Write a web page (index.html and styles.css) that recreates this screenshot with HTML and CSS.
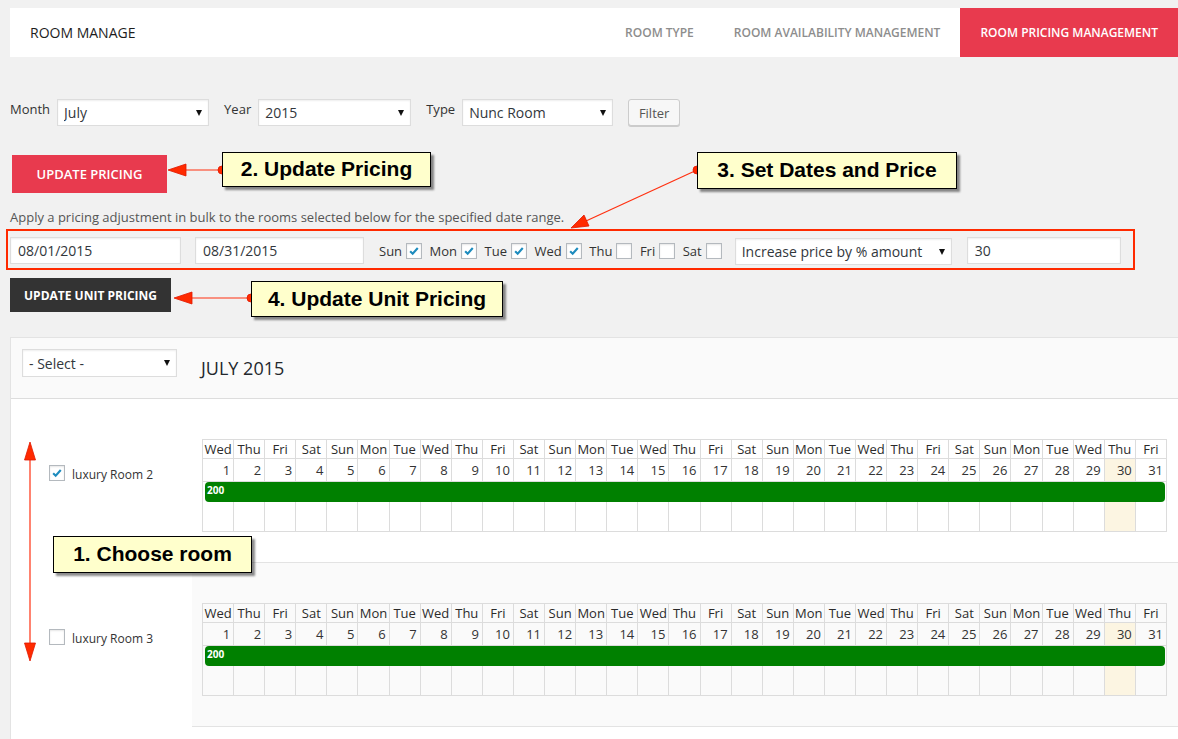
FILE: index.html
```html
<!DOCTYPE html>
<html lang="en">
<head>
<meta charset="utf-8">
<title>Room Manage</title>
<link rel="stylesheet" href="styles.css">
</head>
<body>
<div class="page">
  <header class="topbar">
    <div class="brand">ROOM MANAGE</div>
    <nav class="tabs">
      <a class="tab" href="#">ROOM TYPE</a>
      <a class="tab" href="#">ROOM AVAILABILITY MANAGEMENT</a>
      <a class="tab active" href="#">ROOM PRICING MANAGEMENT</a>
    </nav>
  </header>

  <form class="filters">
    <label class="flabel">Month</label>
    <span class="select sel-month"><select><option>July</option></select></span>
    <label class="flabel">Year</label>
    <span class="select sel-year"><select><option>2015</option></select></span>
    <label class="flabel">Type</label>
    <span class="select sel-type"><select><option>Nunc Room</option></select></span>
    <button type="button" class="btn-filter">Filter</button>
  </form>

  <button type="button" class="btn-red">UPDATE PRICING</button>

  <p class="hint">Apply a pricing adjustment in bulk to the rooms selected below for the specified date range.</p>

  <div class="bulk">
    <input class="field date1" type="text" value="08/01/2015">
    <input class="field date2" type="text" value="08/31/2015">
    <span class="day">Sun</span><span class="cb checked"><svg viewBox="0 0 16 16"><path d="M3.6 8.3l2.9 2.9 5.8-6.6"/></svg></span>
    <span class="day">Mon</span><span class="cb checked"><svg viewBox="0 0 16 16"><path d="M3.6 8.3l2.9 2.9 5.8-6.6"/></svg></span>
    <span class="day">Tue</span><span class="cb checked"><svg viewBox="0 0 16 16"><path d="M3.6 8.3l2.9 2.9 5.8-6.6"/></svg></span>
    <span class="day">Wed</span><span class="cb checked"><svg viewBox="0 0 16 16"><path d="M3.6 8.3l2.9 2.9 5.8-6.6"/></svg></span>
    <span class="day">Thu</span><span class="cb"></span>
    <span class="day">Fri</span><span class="cb"></span>
    <span class="day">Sat</span><span class="cb last"></span>
    <span class="select sel-adjust"><select><option>Increase price by % amount</option></select></span>
    <input class="field amount" type="text" value="30">
  </div>

  <button type="button" class="btn-dark">UPDATE UNIT PRICING</button>

  <section class="panel">
    <div class="panel-head">
      <span class="select sel-room"><select><option>- Select -</option></select></span>
      <h2 class="month-title">JULY 2015</h2>
    </div>
    <table class="rooms">
      <tr>
        <th class="room"><span class="cb checked"><svg viewBox="0 0 16 16"><path d="M3.6 8.3l2.9 2.9 5.8-6.6"/></svg></span><span class="room-name">luxury Room 2</span></th>
        <td class="cal">
          <div class="month-wrap">
            <table class="month">
              <tr class="dow"><th>Wed</th><th>Thu</th><th>Fri</th><th>Sat</th><th>Sun</th><th>Mon</th><th>Tue</th><th>Wed</th><th>Thu</th><th>Fri</th><th>Sat</th><th>Sun</th><th>Mon</th><th>Tue</th><th>Wed</th><th>Thu</th><th>Fri</th><th>Sat</th><th>Sun</th><th>Mon</th><th>Tue</th><th>Wed</th><th>Thu</th><th>Fri</th><th>Sat</th><th>Sun</th><th>Mon</th><th>Tue</th><th>Wed</th><th>Thu</th><th>Fri</th></tr>
              <tr class="num"><td>1</td><td>2</td><td>3</td><td>4</td><td>5</td><td>6</td><td>7</td><td>8</td><td>9</td><td>10</td><td>11</td><td>12</td><td>13</td><td>14</td><td>15</td><td>16</td><td>17</td><td>18</td><td>19</td><td>20</td><td>21</td><td>22</td><td>23</td><td>24</td><td>25</td><td>26</td><td>27</td><td>28</td><td>29</td><td class="today">30</td><td>31</td></tr>
              <tr class="slot"><td></td><td></td><td></td><td></td><td></td><td></td><td></td><td></td><td></td><td></td><td></td><td></td><td></td><td></td><td></td><td></td><td></td><td></td><td></td><td></td><td></td><td></td><td></td><td></td><td></td><td></td><td></td><td></td><td></td><td class="today"></td><td></td></tr>
            </table>
            <div class="bar">200</div>
          </div>
        </td>
      </tr>
      <tr class="alt">
        <th class="room"><span class="cb"></span><span class="room-name">luxury Room 3</span></th>
        <td class="cal">
          <div class="month-wrap">
            <table class="month">
              <tr class="dow"><th>Wed</th><th>Thu</th><th>Fri</th><th>Sat</th><th>Sun</th><th>Mon</th><th>Tue</th><th>Wed</th><th>Thu</th><th>Fri</th><th>Sat</th><th>Sun</th><th>Mon</th><th>Tue</th><th>Wed</th><th>Thu</th><th>Fri</th><th>Sat</th><th>Sun</th><th>Mon</th><th>Tue</th><th>Wed</th><th>Thu</th><th>Fri</th><th>Sat</th><th>Sun</th><th>Mon</th><th>Tue</th><th>Wed</th><th>Thu</th><th>Fri</th></tr>
              <tr class="num"><td>1</td><td>2</td><td>3</td><td>4</td><td>5</td><td>6</td><td>7</td><td>8</td><td>9</td><td>10</td><td>11</td><td>12</td><td>13</td><td>14</td><td>15</td><td>16</td><td>17</td><td>18</td><td>19</td><td>20</td><td>21</td><td>22</td><td>23</td><td>24</td><td>25</td><td>26</td><td>27</td><td>28</td><td>29</td><td class="today">30</td><td>31</td></tr>
              <tr class="slot"><td></td><td></td><td></td><td></td><td></td><td></td><td></td><td></td><td></td><td></td><td></td><td></td><td></td><td></td><td></td><td></td><td></td><td></td><td></td><td></td><td></td><td></td><td></td><td></td><td></td><td></td><td></td><td></td><td></td><td class="today"></td><td></td></tr>
            </table>
            <div class="bar">200</div>
          </div>
        </td>
      </tr>
    </table>
  </section>
</div>

<svg class="annotations" width="1178" height="739" viewBox="0 0 1178 739">
  <g stroke="#ff3010" stroke-width="1.2" fill="none">
    <line x1="222" y1="170" x2="184" y2="170"/>
    <line x1="697" y1="170" x2="586" y2="221"/>
    <line x1="251" y1="298" x2="190" y2="298"/>
    <line x1="30" y1="458" x2="30" y2="645"/>
  </g>
  <g fill="#ff2a00" stroke="#e01800" stroke-width="0.8">
    <circle cx="222" cy="170" r="4"/>
    <polygon points="168,170 186,164 186,176"/>
    <circle cx="697" cy="170" r="4"/>
    <polygon points="571,228 589,226 584,215"/>
    <circle cx="251" cy="298" r="4"/>
    <polygon points="174,298 192,292 192,304"/>
    <polygon points="30,442 24.5,460 35.5,460"/>
    <polygon points="30,661 24.5,643 35.5,643"/>
  </g>
</svg>

<div class="callout c1">1. Choose room</div>
<div class="callout c2">2. Update Pricing</div>
<div class="callout c3">3. Set Dates and Price</div>
<div class="callout c4">4. Update Unit Pricing</div>
</body>
</html>
```

FILE: styles.css
```css
html, body {
  margin: 0;
  padding: 0;
}
body {
  position: relative;
  width: 1178px;
  height: 739px;
  overflow: hidden;
  background: #f1f1f1;
  font-family: "Open Sans", "DejaVu Sans", sans-serif;
  font-size: 13px;
  color: #333;
}
.page {
  padding: 8px 0 0 10px;
}

/* top bar */
.topbar {
  display: flex;
  height: 49px;
  background: #fff;
}
.brand {
  padding: 0 20px;
  line-height: 49px;
  font-size: 14px;
  color: #1d1d1d;
}
.tabs {
  margin-left: auto;
  display: flex;
}
.tab {
  padding: 0 20px;
  line-height: 49px;
  font-size: 12px;
  font-weight: 600;
  color: #8d8d8d;
  text-decoration: none;
}
.tab.active {
  background: #e83a4e;
  color: #fff;
}

/* filters */
.filters {
  display: flex;
  align-items: flex-start;
  margin: 42px 0 0;
  height: 27px;
}
.flabel {
  margin: 1px 7px 0 0;
  line-height: 18px;
  color: #333;
}
.select {
  position: relative;
  display: inline-block;
  height: 27px;
  box-sizing: border-box;
}
.select select {
  appearance: none;
  -webkit-appearance: none;
  width: 100%;
  height: 100%;
  box-sizing: border-box;
  margin: 0;
  padding: 0 6px;
  border: 1px solid #ddd;
  border-radius: 0;
  background: #fff;
  box-shadow: inset 0 1px 2px rgba(0, 0, 0, .07);
  font-family: "Open Sans", sans-serif;
  font-size: 14px;
  color: #32373c;
}
.select::after {
  content: "";
  position: absolute;
  right: 7px;
  top: 11px;
  border-left: 3.5px solid transparent;
  border-right: 3.5px solid transparent;
  border-top: 6px solid #111;
}
.sel-month { width: 152px; margin-right: 15px; }
.sel-year { width: 153px; margin-right: 15px; }
.sel-type { width: 151px; margin-right: 15px; }
.btn-filter {
  width: 52px;
  height: 27px;
  padding: 0;
  border: 1px solid #ccc;
  border-radius: 3px;
  background: #f7f7f7;
  box-shadow: 0 1px 0 #ccc;
  font-family: "Open Sans", sans-serif;
  font-size: 13px;
  color: #555;
}

/* buttons */
.btn-red {
  display: block;
  margin: 29px 0 0 2px;
  width: 155px;
  height: 38px;
  padding: 0;
  border: none;
  background: #e83a4e;
  color: #fff;
  font-family: "Open Sans", sans-serif;
  font-size: 13px;
  font-weight: 600;
}
.btn-dark {
  display: block;
  margin: 8px 0 0;
  width: 161px;
  height: 34px;
  padding: 0;
  border: none;
  background: #333;
  color: #fff;
  font-family: "Open Sans", sans-serif;
  font-size: 12px;
  font-weight: 700;
}

.hint {
  margin: 14px 0 0;
  line-height: 20px;
  color: #555;
}

/* bulk row */
.bulk {
  display: flex;
  align-items: center;
  box-sizing: border-box;
  width: 1129px;
  height: 41px;
  margin: 2px 0 0 -4px;
  padding: 4px 0 2px 2px;
  border: 2px solid #ff2a00;
}
.field {
  box-sizing: border-box;
  height: 27px;
  margin: 0;
  padding: 0 7px;
  border: 1px solid #ddd;
  background: #fff;
  box-shadow: inset 0 1px 2px rgba(0, 0, 0, .07);
  font-family: "Open Sans", sans-serif;
  font-size: 14px;
  color: #32373c;
}
.date1 { width: 171px; margin-right: 14px; }
.date2 { width: 169px; margin-right: 15px; }
.amount { width: 154px; }
.day {
  margin-right: 4px;
  line-height: 18px;
  color: #333;
}
.cb {
  display: inline-block;
  box-sizing: border-box;
  width: 16px;
  height: 16px;
  border: 1px solid #b4b9be;
  background: #fff;
  box-shadow: inset 0 1px 2px rgba(0, 0, 0, .1);
  margin-right: 7.5px;
  flex: none;
}
.cb svg {
  display: block;
  width: 14px;
  height: 14px;
}
.cb path {
  fill: none;
  stroke: #1e8cbe;
  stroke-width: 2.4;
}
.cb.last { margin-right: 13px; }
.sel-adjust { width: 217px; margin: 2px 15px 0 0; }

/* panel */
.panel {
  margin-top: 25px;
  background: #fff;
  border-top: 1px solid #e3e3e3;
  border-left: 1px solid #e3e3e3;
  padding-bottom: 40px;
}
.panel-head {
  display: flex;
  align-items: flex-start;
  height: 61px;
  box-sizing: border-box;
  padding: 11px 11px 0;
  background: #fafafa;
  border-bottom: 1px solid #ddd;
}
.sel-room {
  width: 155px;
  height: 28px;
  margin: 0 24px 0 0;
}
.month-title {
  margin: 7px 0 0;
  font-size: 18px;
  line-height: 24px;
  font-weight: 400;
  color: #23282d;
}

.rooms {
  width: 100%;
  border-collapse: collapse;
}
.room {
  width: 181px;
  box-sizing: border-box;
  padding: 66px 0 0 38px;
  vertical-align: top;
  text-align: left;
  font-weight: 400;
  background: #fff;
  white-space: nowrap;
}
.room .cb {
  vertical-align: top;
  margin-right: 7px;
}
.room-name {
  font-size: 12px;
  line-height: 16px;
  color: #333;
}
.cal {
  padding: 40px 11px 30px 10px;
}
.alt .cal {
  background: #fafafa;
  border-top: 1px solid #e3e3e3;
  border-bottom: 1px solid #e3e3e3;
}

.month-wrap {
  position: relative;
  width: 965px;
}
.month {
  width: 965px;
  border-collapse: collapse;
  table-layout: fixed;
}
.month th,
.month td {
  border: 1px solid #dcdcdc;
  padding: 0;
  font-size: 13px;
  color: #2b2b2b;
}
.month th {
  height: 18px;
  line-height: 17px;
  font-weight: 400;
  text-align: center;
}
.month .num td {
  height: 22px;
  text-align: right;
  padding-right: 3px;
  color: #333;
}
.month .slot td {
  height: 49px;
}
.month .today {
  background: #fcf5e2;
}
.bar {
  position: absolute;
  left: 3px;
  right: 2px;
  top: 43px;
  height: 20px;
  box-sizing: border-box;
  padding: 2px 0 0 2px;
  border-radius: 4px;
  background: #008000;
  color: #fff;
  font-size: 10px;
  font-weight: 700;
  line-height: 12px;
}

/* annotations (overlay) */
.annotations {
  position: absolute;
  left: 0;
  top: 0;
  pointer-events: none;
}
.callout {
  position: absolute;
  box-sizing: border-box;
  border: 1.5px solid #000;
  background: #ffffcc;
  box-shadow: 3px 3px 2px rgba(0, 0, 0, .45);
  font-family: "Liberation Sans", Arial, sans-serif;
  font-weight: 700;
  font-size: 21px;
  color: #000;
  text-align: center;
  white-space: nowrap;
}
.c1 { left: 53px; top: 536px; width: 199px; height: 37px; line-height: 34px; }
.c2 { left: 222px; top: 152px; width: 209px; height: 35px; line-height: 32px; }
.c3 { left: 697px; top: 152px; width: 260px; height: 37px; line-height: 34px; }
.c4 { left: 251px; top: 281px; width: 252px; height: 36px; line-height: 33px; }
```
